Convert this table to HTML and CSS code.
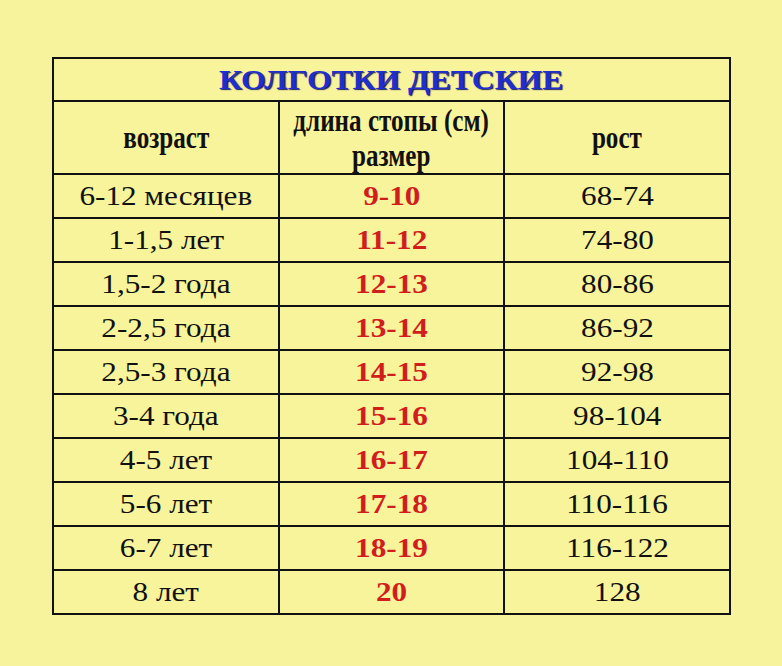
FILE: index.html
```html
<!DOCTYPE html>
<html lang="ru">
<head>
<meta charset="utf-8">
<title>Колготки детские</title>
<link rel="stylesheet" href="styles.css">
</head>
<body>
<table class="sizes">
  <tr class="title-row"><td colspan="3" class="title"><span class="t">КОЛГОТКИ ДЕТСКИЕ</span></td></tr>
  <tr class="head-row">
    <td class="head"><span class="h">возраст</span></td>
    <td class="head"><span class="h">длина стопы (см)<br>размер</span></td>
    <td class="head"><span class="h">рост</span></td>
  </tr>
  <tr><td><span class="w">6-12 месяцев</span></td><td class="size"><span class="w">9-10</span></td><td><span class="w">68-74</span></td></tr>
  <tr><td><span class="w">1-1,5 лет</span></td><td class="size"><span class="w">11-12</span></td><td><span class="w">74-80</span></td></tr>
  <tr><td><span class="w">1,5-2 года</span></td><td class="size"><span class="w">12-13</span></td><td><span class="w">80-86</span></td></tr>
  <tr><td><span class="w">2-2,5 года</span></td><td class="size"><span class="w">13-14</span></td><td><span class="w">86-92</span></td></tr>
  <tr><td><span class="w">2,5-3 года</span></td><td class="size"><span class="w">14-15</span></td><td><span class="w">92-98</span></td></tr>
  <tr><td><span class="w">3-4 года</span></td><td class="size"><span class="w">15-16</span></td><td><span class="w">98-104</span></td></tr>
  <tr><td><span class="w">4-5 лет</span></td><td class="size"><span class="w">16-17</span></td><td><span class="w">104-110</span></td></tr>
  <tr><td><span class="w">5-6 лет</span></td><td class="size"><span class="w">17-18</span></td><td><span class="w">110-116</span></td></tr>
  <tr><td><span class="w">6-7 лет</span></td><td class="size"><span class="w">18-19</span></td><td><span class="w">116-122</span></td></tr>
  <tr><td><span class="w">8 лет</span></td><td class="size"><span class="w">20</span></td><td><span class="w">128</span></td></tr>
</table>
</body>
</html>
```
FILE: styles.css
```css
html, body {
  margin: 0;
  background: #f6f39c;
}
body {
  padding: 57px 0 0 52px;
  font-family: "Liberation Serif", "Times New Roman", serif;
  color: #111;
}
.sizes {
  border-collapse: collapse;
  width: 679px;
  table-layout: fixed;
  background: #f7f49b;
}
.sizes td {
  border: 2.5px solid #111;
  text-align: center;
  vertical-align: middle;
  padding: 0;
  height: 42px;
  font-size: 27px;
  line-height: 30px;
}
.w {
  display: inline-block;
  transform: scaleX(1.155);
  white-space: nowrap;
}
.t {
  display: inline-block;
  transform: scaleX(1.17);
  white-space: nowrap;
}
.h {
  display: inline-block;
  transform: scale(0.93, 1.15);
  white-space: nowrap;
}
.title-row td { height: 41px; }
.head-row td { height: 71px; }
.title {
  font-weight: bold;
  font-size: 31px;
  color: #1f2fcf;
  text-shadow: 1px 1px 1px #1a1a60;
}
.head {
  font-weight: bold;
  font-size: 19px;
  line-height: 24px;
}
.size {
  color: #d21d1d;
  font-weight: bold;
}
```
